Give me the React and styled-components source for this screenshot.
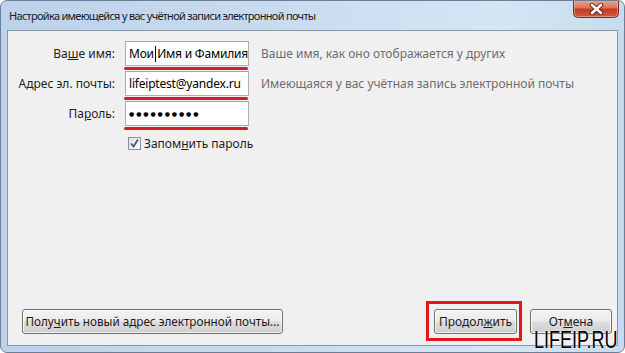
import React from "react";
import styled, { createGlobalStyle } from "styled-components";

const GlobalStyle = createGlobalStyle`
  html, body {
    margin: 0;
    padding: 0;
    background: #ffffff;
  }
  body {
    font-family: "Noto Sans", "Open Sans", sans-serif;
    font-size: 12px;
  }
`;

// Window chrome
const Window = styled.div`
  position: relative;
  box-sizing: border-box;
  width: 625px;
  height: 353px;
  display: flex;
  flex-direction: column;
  border: 1px solid #6d7f96;
  border-radius: 7px;
  background: linear-gradient(90deg, #bcd2ea 0%, #c9dbef 45%, #d6e5f4 80%, #c8dbee 100%);
  overflow: hidden;
`;

const TitleBar = styled.div`
  height: 29px;
  display: flex;
  align-items: flex-start;
  justify-content: space-between;
  padding-left: 8px;
`;

const Title = styled.div`
  line-height: 30px;
  font-size: 11px;
  letter-spacing: -0.7px;
  color: #1a1a1a;
  white-space: nowrap;
`;

const CloseButton = styled.div`
  width: 46px;
  height: 18px;
  margin: -1px 5px 0 0;
  display: flex;
  align-items: center;
  justify-content: center;
  box-sizing: border-box;
  border: 1px solid #7a2a1c;
  border-top: none;
  border-radius: 0 0 5px 5px;
  background: linear-gradient(180deg, #e9a898 0%, #d9735e 45%, #c53a22 55%, #d2593f 100%);
  box-shadow: inset 0 0 0 1px rgba(255, 210, 200, 0.45);
`;

const Client = styled.div`
  flex: 1;
  display: flex;
  flex-direction: column;
  margin: 0 6px 6px 6px;
  padding-top: 10px;
  border: 1px solid #8596aa;
  background: #f0f0f0;
`;

// Form
const Form = styled.div`
  display: grid;
  grid-template-columns: 107px 124px 1fr;
  column-gap: 10px;
  row-gap: 1px;
`;

const Label = styled.div`
  text-align: right;
  line-height: 25px;
  color: #1e1e1e;
  white-space: nowrap;
`;

const Hint = styled.div`
  line-height: 25px;
  margin-left: 2px;
  color: #6d6d6d;
  white-space: nowrap;
`;

const Field = styled.div`
  display: flex;
  flex-direction: column;
  gap: 1px;
`;

const Input = styled.div`
  box-sizing: border-box;
  height: 25px;
  display: flex;
  align-items: center;
  padding-left: 3px;
  border: 1px solid #abadb3;
  border-top-color: #a0a4ae;
  background: #ffffff;
  font-size: 12px;
  letter-spacing: -0.2px;
  color: #000000;
  white-space: pre;
  overflow: hidden;
`;

const Dots = styled.span`
  font-family: "DejaVu Sans", sans-serif;
  font-size: 6px;
  letter-spacing: 1.9px;
`;

const Caret = styled.span`
  display: inline-block;
  width: 1px;
  height: 16px;
  margin: 0 2px 0 1px;
  background: #000000;
  vertical-align: middle;
`;

const RedLine = styled.div`
  height: 3px;
  border-radius: 2px;
  background: #d51e22;
  margin: 0 1px 0 -1px;
`;

const CheckRow = styled.label`
  grid-column: 2 / 4;
  display: flex;
  align-items: center;
  gap: 3px;
  margin: 4px 0 0 3px;
  color: #1e1e1e;
`;

const CheckBox = styled.span`
  box-sizing: border-box;
  width: 13px;
  height: 13px;
  display: flex;
  align-items: center;
  justify-content: center;
  border: 1px solid #8f8f8f;
  background: linear-gradient(135deg, #dcdcdc, #ffffff);
`;

const Mnemonic = styled.span`
  text-decoration: underline;
`;

// Buttons
const ButtonBar = styled.div`
  margin-top: auto;
  display: flex;
  align-items: center;
  padding: 0 5px 4px 14px;
`;

const Button = styled.div`
  box-sizing: border-box;
  height: 25px;
  width: ${(p) => p.$width}px;
  display: flex;
  align-items: center;
  justify-content: center;
  border: 1px solid #707070;
  border-radius: 3px;
  background: linear-gradient(180deg, #f2f2f2 0%, #ebebeb 48%, #dddddd 52%, #cfcfcf 100%);
  box-shadow: inset 0 0 0 1px rgba(255, 255, 255, 0.7);
  font-size: ${(p) => p.$size || 12}px;
  color: #1a1a1a;
  white-space: nowrap;
`;

const Highlight = styled.div`
  margin-left: auto;
  padding: 5px 2px 4px 5px;
  border: 3px solid #e3161c;
`;

const CancelButton = styled(Button)`
  margin-left: 8px;
`;

const Watermark = styled.div`
  position: absolute;
  right: 6px;
  bottom: 0;
  font-family: "Liberation Sans", Arial, sans-serif;
  font-size: 24px;
  line-height: 24px;
  color: #000000;
  transform: scaleX(0.75);
  transform-origin: right bottom;
  text-shadow: 0 0 2px #ffffff;
`;

const CloseIcon = () => (
  <svg width="15" height="12" viewBox="0 0 15 12">
    <path d="M3 2 L12 10 M12 2 L3 10" stroke="#6b2418" strokeWidth="4.4" strokeLinecap="round" />
    <path d="M3 2 L12 10 M12 2 L3 10" stroke="#ffffff" strokeWidth="2.6" strokeLinecap="round" />
  </svg>
);

const CheckIcon = () => (
  <svg width="11" height="11" viewBox="0 0 11 11">
    <path d="M2 5.5 L4.5 8.5 L9 1.5" fill="none" stroke="#3a5a8c" strokeWidth="1.8" />
  </svg>
);

const App = () => {
  return (
    <>
      <GlobalStyle />
      <Window>
        <TitleBar>
          <Title>Настройка имеющейся у вас учётной записи электронной почты</Title>
          <CloseButton>
            <CloseIcon />
          </CloseButton>
        </TitleBar>

        <Client>
          <Form>
            <Label>
              Ва<Mnemonic>ш</Mnemonic>е имя:
            </Label>
            <Field>
              <Input>
                Мои<Caret />Имя и Фамилия
              </Input>
              <RedLine />
            </Field>
            <Hint>Ваше имя, как оно отображается у других</Hint>

            <Label>
              А<Mnemonic>д</Mnemonic>рес эл. почты:
            </Label>
            <Field>
              <Input>lifeiptest@yandex.ru</Input>
              <RedLine />
            </Field>
            <Hint>Имеющаяся у вас учётная запись электронной почты</Hint>

            <Label>
              Па<Mnemonic>р</Mnemonic>оль:
            </Label>
            <Field>
              <Input>
                <Dots>●●●●●●●●●●</Dots>
              </Input>
              <RedLine />
            </Field>
            <Hint />

            <CheckRow>
              <CheckBox>
                <CheckIcon />
              </CheckBox>
              <span>
                Запом<Mnemonic>н</Mnemonic>ить пароль
              </span>
            </CheckRow>
          </Form>

          <ButtonBar>
            <Button $width={261} $size={11.7}>
              Полу<Mnemonic>ч</Mnemonic>ить новый адрес электронной почты...
            </Button>
            <Highlight>
              <Button $width={83}>
                Продол<Mnemonic>ж</Mnemonic>ить
              </Button>
            </Highlight>
            <CancelButton $width={82}>
              От<Mnemonic>м</Mnemonic>ена
            </CancelButton>
          </ButtonBar>
        </Client>

        <Watermark>LIFEIP.RU</Watermark>
      </Window>
    </>
  );
};

export default App;
